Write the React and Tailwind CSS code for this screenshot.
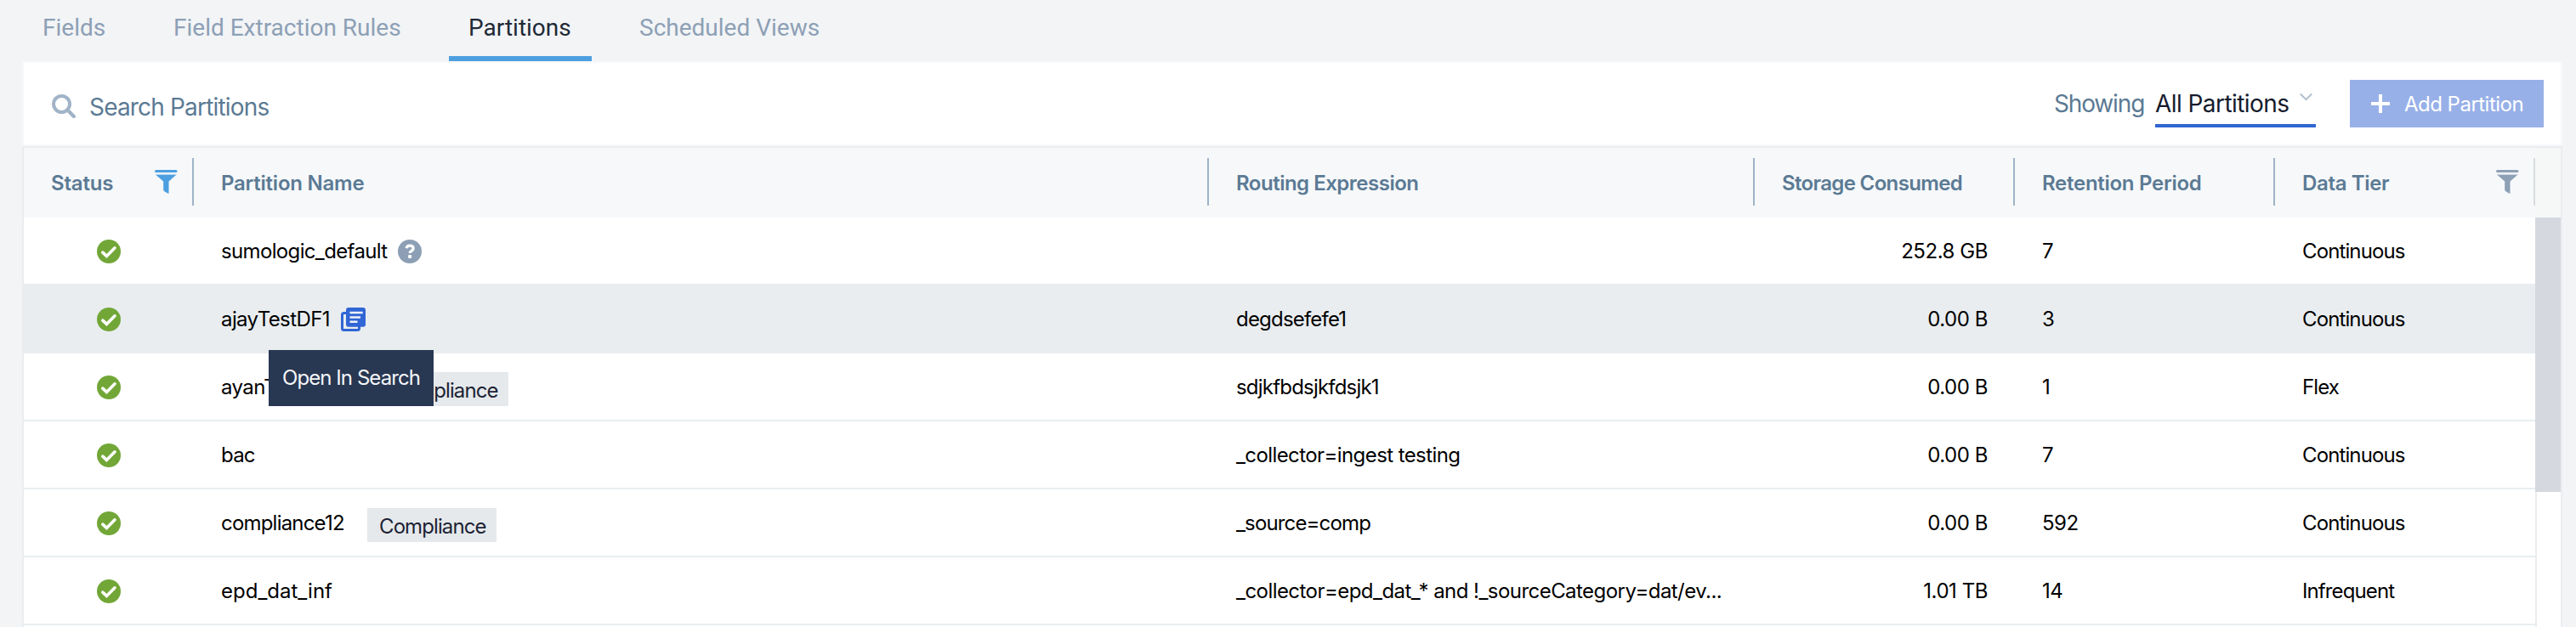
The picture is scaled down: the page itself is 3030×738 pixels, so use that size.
const columns = "grid grid-cols-[200px_1194px_642px_306px_306px_306px_30px]";

function CheckIcon() {
  return (
    <svg className="mt-0.5 size-7" viewBox="0 0 28 28" fill="none">
      <circle cx="14" cy="14" r="14" fill="#72a738" />
      <path d="M6.8 15.2 11.4 19.4 21 9.8" stroke="#fff" strokeWidth="3.6" strokeLinecap="round" />
    </svg>
  );
}

function HelpIcon() {
  return (
    <svg className="ml-[12px] mt-0.5 size-7" viewBox="0 0 28 28" fill="none">
      <circle cx="14" cy="14" r="14" fill="#8c9fb5" />
      <path d="M10.1 10.3c.4-2 1.900-3.100 4-3.100 2.400 0 4 1.200 4 3.200 0 2.900-3.900 2.700-3.900 5.700" stroke="#fff" strokeWidth="3.3" />
      <rect x="12.100" y="18.100" width="4" height="3.800" rx="0.800" fill="#fff" />
    </svg>
  );
}

function OpenInSearchIcon() {
  return (
    <svg className="ml-[13px] mt-0.5 h-7 w-[29px]" viewBox="0 0 29 28" fill="none">
      <path d="M7 6.500H3.500a2 2 0 0 0-2 2v16a2 2 0 0 0 2 2H19.500a2 2 0 0 0 2-2V21" stroke="#3066d5" strokeWidth="3" />
      <rect x="6" y="0" width="23" height="22.700" rx="3" fill="#3066d5" />
      <path d="M10.500 6H25.700M10.500 11.500H23M10.500 16.700H19.500" stroke="#eef2f8" strokeWidth="2.500" />
    </svg>
  );
}

function FilterIcon({ color }) {
  return (
    <svg className="h-7 w-[27px]" viewBox="0 0 27 28" fill={color}>
      <rect x="0" y="0" width="26.500" height="3" rx="1.500" />
      <rect x="1" y="4.800" width="24.500" height="1" opacity="0.500" />
      <path d="M1.500 6H25L16.500 13.500V28C13.500 27 11 25.300 10.200 23.800V13.500Z" />
    </svg>
  );
}

function Tag({ children }) {
  return (
    <span className="mt-1.5 flex h-10 w-[152px] items-center bg-[#e5e9ec] pl-[14px] pt-1 tracking-[-0.9px] text-[#1c2333]">
      {children}
    </span>
  );
}

const rows = [
  { name: "sumologic_default", track: "tracking-[-0.65px]", help: true, expr: "", exprTrack: "", size: "252.8 GB", days: "7", tier: "Continuous" },
  { name: "ajayTestDF1", track: "tracking-[-0.6px]", open: true, expr: "degdsefefe1", exprTrack: "tracking-[-0.8px]", size: "0.00 B", days: "3", tier: "Continuous" },
  { name: "ayanTest", track: "tracking-[-0.57px] w-[186px]", tag: true, expr: "sdjkfbdsjkfdsjk1", exprTrack: "tracking-[-0.8px]", size: "0.00 B", days: "1", tier: "Flex" },
  { name: "bac", track: "tracking-[-0.8px]", expr: "_collector=ingest testing", exprTrack: "tracking-[-0.59px]", size: "0.00 B", days: "7", tier: "Continuous" },
  { name: "compliance12", track: "tracking-[-0.8px] w-[172px]", tag: true, expr: "_source=comp", exprTrack: "tracking-[-0.85px]", size: "0.00 B", days: "592", tier: "Continuous" },
  { name: "epd_dat_inf", track: "tracking-[0px]", expr: "_collector=epd_dat_* and !_sourceCategory=dat/ev...", exprTrack: "tracking-[-0.55px]", size: "1.01 TB", days: "14", tier: "Infrequent" },
];

function Row({ row }) {
  return (
    <div
      className={`grid h-20 shrink-0 grid-cols-[200px_1194px_642px_306px_306px_306px] items-center border-b-2 border-[#e9edf0] ${
        row.open ? "bg-[#e9edf0]" : "bg-white"
      }`}
    >
      <div className="flex justify-center"><CheckIcon /></div>
      <div className="relative flex items-center pl-8">
        <span className={`pt-0.5 ${row.track}`}>{row.name}</span>
        {row.help && <HelpIcon />}
        {row.open && <OpenInSearchIcon />}
        {row.tag && <Tag>Compliance</Tag>}
        {row.open && (
          <div className="absolute left-[88px] top-[54px] z-10 flex h-[66px] w-[194px] items-center bg-[#283752] pl-4 tracking-[-0.93px] text-[#f4f6f9]">
            Open In Search
          </div>
        )}
      </div>
      <div className={`truncate pl-8 pt-0.5 ${row.exprTrack}`}>{row.expr}</div>
      <div className="pr-8 pt-0.5 text-right tracking-[-0.45px]">{row.size}</div>
      <div className="pl-8 pt-0.5 tracking-[-0.5px]">{row.days}</div>
      <div className="pl-8 pt-0.5 tracking-[-0.88px]">{row.tier}</div>
    </div>
  );
}

function HeaderCell({ children, className = "", line = "border-[#9fb3c8]" }) {
  return (
    <div className={`flex h-14 items-center border-r-2 pl-8 ${line} ${className}`}>{children}</div>
  );
}

export default function App() {
  return (
    <div className="flex h-[738px] w-[3030px] flex-col overflow-hidden bg-[#f2f4f6] pl-[26px] pr-4 font-['Inter',sans-serif] text-2xl text-black">
      <nav className="flex h-[72px] shrink-0 font-['Roboto',sans-serif] text-[28px] leading-[42px] text-[#8da0b5]">
        <div className="w-[176px] pl-6 pt-3">Fields</div>
        <div className="w-[326px] pl-0.5 pt-3">Field Extraction Rules</div>
        <div className="h-[72px] w-[168px] border-b-[6px] border-[#4d9fe0] pl-[23px] pt-3 text-[#1f2937]">Partitions</div>
        <div className="pl-[56px] pt-3">Scheduled Views</div>
      </nav>

      <section className="flex h-[100px] shrink-0 items-start justify-between border-2 border-[#f7f8fa] bg-white">
        <div className="flex items-center pl-[33px] pt-[34px] text-[28px] leading-9 text-[#5b7a94]">
          <svg className="-mt-0.5 size-[28px]" viewBox="0 0 28 28" fill="none" stroke="#a1b4c7" strokeLinecap="round">
            <circle cx="11.500" cy="11.500" r="9.500" strokeWidth="4" />
            <path d="m18.500 18.500 7.300 7.500" strokeWidth="4.300" />
          </svg>
          <span className="pl-4 tracking-[-0.82px]">Search Partitions</span>
        </div>
        <div className="flex pr-[20px] pt-5">
          <div className="w-[119px] pt-[10px] text-[28px] leading-9 tracking-[-1.15px] text-[#5b7a94]">Showing</div>
          <div className="mr-10 flex h-14 w-[189px] border-b-4 border-[#3066d0] pt-[10px] text-[28px] leading-9 tracking-[-0.56px] text-[#151b2d]">
            <span className="w-[170px] whitespace-nowrap">All Partitions</span>
            <svg className="mt-[5px] h-[10px] w-[15px]" viewBox="0 0 15 10" fill="none" stroke="#b2c0cf" strokeWidth="2">
              <path d="m0.800 1.500 6.700 6.700L14.200 1.500" />
            </svg>
          </div>
          <button className="flex h-14 w-[228px] items-center bg-[#98b0e8] pl-[25px] tracking-[-0.52px] text-white">
            <svg className="size-[22px]" viewBox="0 0 22 22" stroke="#fff" strokeWidth="4">
              <path d="M11 0V22M0 11H22" />
            </svg>
            <span className="whitespace-nowrap pl-[17px] pt-0.5">Add Partition</span>
          </button>
        </div>
      </section>

      <section className="flex min-h-0 flex-1 flex-col border-x-2 border-t-2 border-[#eaedf0] bg-white">
        <div className={`${columns} h-[82px] shrink-0 items-center bg-[#f6f8fa] pb-0.5 font-semibold text-[#5b7a94]`}>
          <HeaderCell className="pr-[17px]">
            <span className="flex-1 pt-[3px] tracking-[-0.2px]">Status</span>
            <FilterIcon color="#4d9fe0" />
          </HeaderCell>
          <HeaderCell><span className="pt-[3px] tracking-[-0.23px]">Partition Name</span></HeaderCell>
          <HeaderCell><span className="pt-[3px] tracking-[-0.5px]">Routing Expression</span></HeaderCell>
          <HeaderCell><span className="pt-[3px] tracking-[-0.65px]">Storage Consumed</span></HeaderCell>
          <HeaderCell><span className="pt-[3px] tracking-[-0.27px]">Retention Period</span></HeaderCell>
          <HeaderCell className="pr-[17px]" line="border-[#d9dcdf]">
            <span className="flex-1 pt-[3px] tracking-[-0.35px]">Data Tier</span>
            <FilterIcon color="#8da0b5" />
          </HeaderCell>
          <div className="-mb-0.5 h-[82px] bg-[#f5f8f7]" />
        </div>
        <div className="flex min-h-0 flex-1">
          <div className="flex w-[2954px] flex-col overflow-hidden">
            {rows.map((row, i) => (
              <Row key={i} row={row} />
            ))}
            <div className="flex-1" />
          </div>
          <div className="w-[30px] border-l-2 border-[#eaedf0]">
            <div className="-ml-0.5 h-[323px] bg-[#d5d9df]" />
          </div>
        </div>
      </section>
    </div>
  );
}
